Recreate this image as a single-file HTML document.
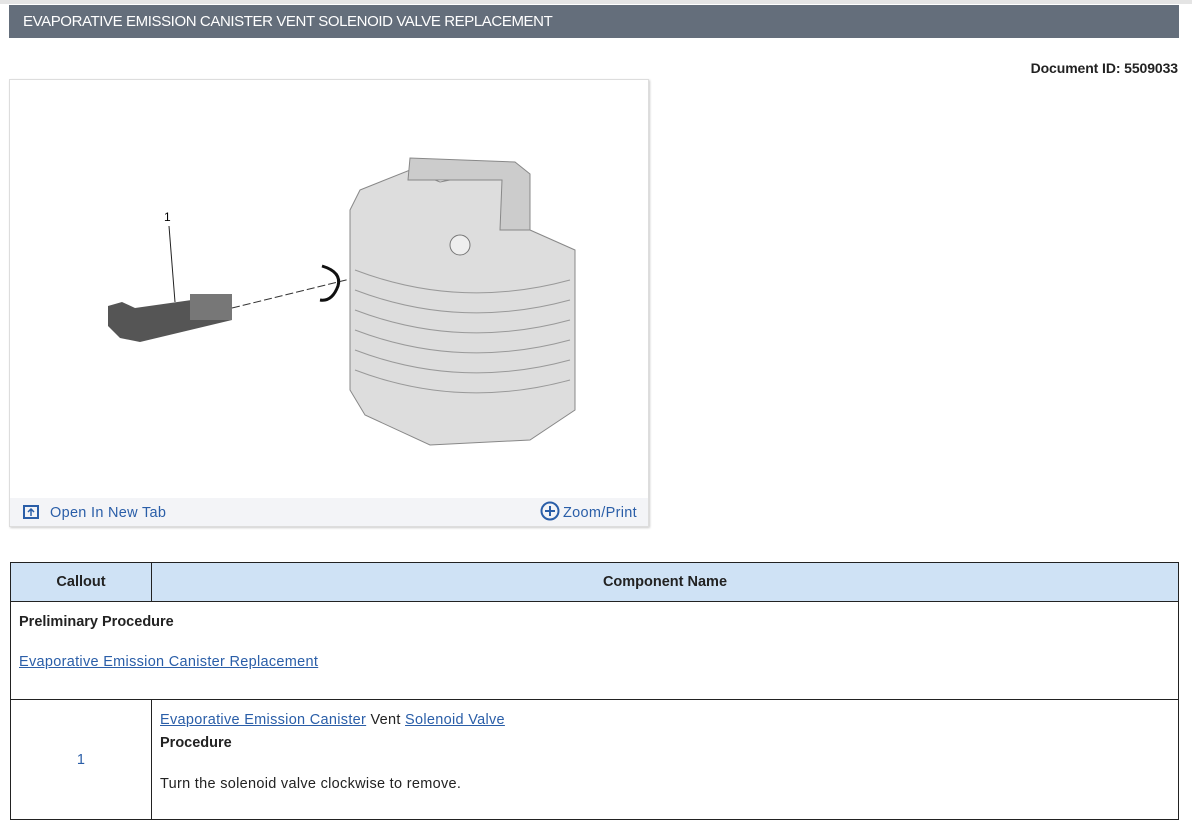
<!DOCTYPE html>
<html><head><meta charset="utf-8"><style>
body{margin:0;background:#fff;font-family:"Liberation Sans",sans-serif;width:1192px;height:827px;overflow:hidden;position:relative;color:#222}
.top{position:absolute;left:0;top:0;width:1192px;height:4px;background:#e4e4e4}
.hdr{position:absolute;left:9px;top:5px;width:1170px;height:33px;background:#646e7b;color:#fff;font-size:15px;line-height:34px;letter-spacing:-0.4px}
.hdr span{padding-left:14px}
.doc{position:absolute;right:14px;top:60px;font-size:14px;font-weight:bold;letter-spacing:-0.1px}
.img{position:absolute;left:9px;top:79px;width:638px;height:446px;border:1px solid #ddd;box-shadow:1px 1px 2px #ccc}
.foot{position:absolute;left:0;bottom:0;width:638px;height:28px;background:#f3f4f7;color:#2a5ea8;font-size:14.5px;letter-spacing:0.3px}
a{color:#2a5ea8}
table{position:absolute;left:10px;top:562px;width:1169px;border-collapse:collapse;font-size:14.5px;letter-spacing:0.3px}
td,th{border:1px solid #222;padding:0 8px}
th{background:#cfe2f5;height:38px;font-weight:bold;color:#222;letter-spacing:0}
</style></head><body>
<div class="top"></div>
<div class="hdr"><span>EVAPORATIVE EMISSION CANISTER VENT SOLENOID VALVE REPLACEMENT</span></div>
<div class="doc">Document ID: 5509033</div>
<div class="img">
<svg width="638" height="418" viewBox="0 0 638 418">
 <text x="154" y="141" font-size="12" font-family="Liberation Sans">1</text>
 <line x1="159" y1="146" x2="165" y2="222" stroke="#222" stroke-width="1"/>
 <path d="M98 226 L112 222 L125 228 L210 216 L222 222 L222 240 L130 262 L110 258 L98 246Z" fill="#555"/>
 <rect x="180" y="214" width="42" height="26" fill="#777"/>
 <line x1="222" y1="228" x2="450" y2="172" stroke="#333" stroke-dasharray="8,3"/>
 <path d="M312 186 Q332 192 328 206 Q322 222 310 220" fill="none" stroke="#111" stroke-width="3"/>
 <path d="M350 110 L400 90 L430 102 L480 92 L520 110 L520 150 L565 170 L565 330 L520 360 L420 365 L355 335 L340 310 L340 130Z" fill="#ddd" stroke="#888"/>
 <path d="M398 100 L400 78 L505 82 L520 94 L520 150 L490 150 L492 100Z" fill="#ccc" stroke="#888"/>
 <g stroke="#999" fill="none">
 <path d="M345 190 Q450 230 560 200"/><path d="M345 210 Q450 250 560 220"/><path d="M345 230 Q450 270 560 240"/><path d="M345 250 Q450 290 560 260"/><path d="M345 270 Q450 310 560 280"/><path d="M345 290 Q450 330 560 300"/>
 </g>
 <circle cx="450" cy="165" r="10" fill="#eee" stroke="#777"/>
</svg>
<div class="foot">
 <svg style="position:absolute;left:13px;top:7px" width="16" height="14" viewBox="0 0 16 14"><rect x="1" y="1" width="14" height="12" fill="none" stroke="#2a5ea8" stroke-width="2"/><path d="M8 11V5M5 7l3-3 3 3" stroke="#2a5ea8" stroke-width="1.5" fill="none"/></svg>
 <span style="position:absolute;left:40px;top:7px">Open In New Tab</span>
 <svg style="position:absolute;left:530px;top:3px" width="20" height="20" viewBox="0 0 20 20"><circle cx="10" cy="10" r="8.5" fill="none" stroke="#2a5ea8" stroke-width="2"/><path d="M10 5v10M5 10h10" stroke="#2a5ea8" stroke-width="2"/></svg>
 <span style="position:absolute;left:553px;top:7px">Zoom/Print</span>
</div>
</div>
<table>
<tr><th style="width:124px">Callout</th><th>Component Name</th></tr>
<tr><td colspan="2" style="height:85px;vertical-align:top;padding-top:12px"><b style="letter-spacing:0">Preliminary Procedure</b><div style="margin-top:24px"><a href="#">Evaporative Emission Canister Replacement</a></div></td></tr>
<tr><td style="text-align:center;color:#2a5ea8;height:119px">1</td><td style="vertical-align:top;padding-top:9px;line-height:23px"><a href="#">Evaporative Emission Canister</a> Vent <a href="#">Solenoid Valve</a><br><b style="letter-spacing:0">Procedure</b><div style="margin-top:18px">Turn the solenoid valve clockwise to remove.</div></td></tr>
</table>
</body></html>
